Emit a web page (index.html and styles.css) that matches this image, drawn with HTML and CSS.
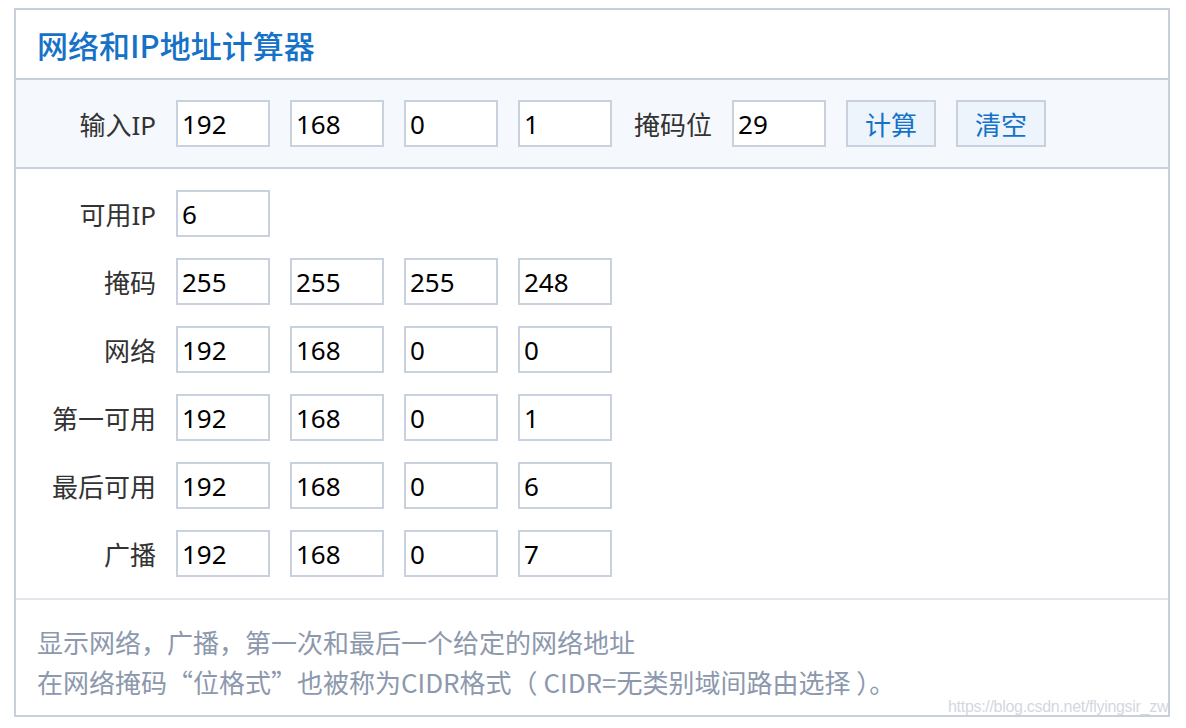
FILE: index.html
```html
<!DOCTYPE html>
<html lang="zh-CN">
<head>
  <meta charset="UTF-8">
  <meta name="viewport" content="width=device-width, initial-scale=1.0">
  <title>网络和IP地址计算器</title>
  <link rel="stylesheet" href="styles.css">
</head>
<body>
  <div class="calc">
    <div class="calc-title">网络和IP地址计算器</div>

    <div class="calc-input">
      <div class="row">
        <span class="row-label">输入IP</span>
        <input class="octet" id="ip0" value="192">
        <input class="octet" id="ip1" value="168">
        <input class="octet" id="ip2" value="0">
        <input class="octet" id="ip3" value="1">
        <span class="mask-label">掩码位</span>
        <input class="octet" id="bits" value="29">
        <button class="btn" onclick="calculate()">计算</button>
        <button class="btn" onclick="clearAll()">清空</button>
      </div>
    </div>

    <div class="calc-result">
      <div class="row">
        <span class="row-label">可用IP</span>
        <input class="octet" id="hosts" value="6">
      </div>
      <div class="row">
        <span class="row-label">掩码</span>
        <input class="octet" id="mask0" value="255">
        <input class="octet" id="mask1" value="255">
        <input class="octet" id="mask2" value="255">
        <input class="octet" id="mask3" value="248">
      </div>
      <div class="row">
        <span class="row-label">网络</span>
        <input class="octet" id="net0" value="192">
        <input class="octet" id="net1" value="168">
        <input class="octet" id="net2" value="0">
        <input class="octet" id="net3" value="0">
      </div>
      <div class="row">
        <span class="row-label">第一可用</span>
        <input class="octet" id="first0" value="192">
        <input class="octet" id="first1" value="168">
        <input class="octet" id="first2" value="0">
        <input class="octet" id="first3" value="1">
      </div>
      <div class="row">
        <span class="row-label">最后可用</span>
        <input class="octet" id="last0" value="192">
        <input class="octet" id="last1" value="168">
        <input class="octet" id="last2" value="0">
        <input class="octet" id="last3" value="6">
      </div>
      <div class="row">
        <span class="row-label">广播</span>
        <input class="octet" id="bc0" value="192">
        <input class="octet" id="bc1" value="168">
        <input class="octet" id="bc2" value="0">
        <input class="octet" id="bc3" value="7">
      </div>
    </div>

    <div class="calc-note">
      <p>显示网络，广播，第一次和最后一个给定的网络地址</p>
      <p>在网络掩码“位格式”也被称为CIDR格式（ CIDR=无类别域间路由选择 ）。</p>
    </div>
  </div>

  <div class="watermark">https://blog.csdn.net/flyingsir_zw</div>

  <script>
    function setOctets(prefix, value) {
      for (let i = 0; i < 4; i++) {
        document.getElementById(prefix + i).value = (value >>> (24 - i * 8)) & 255;
      }
    }

    function calculate() {
      let ip = 0;
      for (let i = 0; i < 4; i++) {
        ip = ip * 256 + (parseInt(document.getElementById('ip' + i).value) || 0);
      }
      let bits = parseInt(document.getElementById('bits').value) || 0;
      let mask = bits === 0 ? 0 : (0xffffffff << (32 - bits)) >>> 0;
      let net = (ip & mask) >>> 0;
      let bc = (net | (~mask >>> 0)) >>> 0;

      document.getElementById('hosts').value = Math.max(bc - net - 1, 0);
      setOctets('mask', mask);
      setOctets('net', net);
      setOctets('first', net + 1);
      setOctets('last', bc - 1);
      setOctets('bc', bc);
    }

    function clearAll() {
      document.querySelectorAll('.octet').forEach(function (el) {
        el.value = '';
      });
    }
  </script>
</body>
</html>
```

FILE: styles.css
```css
body {
  margin: 0;
  background-color: #ffffff;
  font-family: "Noto Sans", "Noto Sans CJK SC", sans-serif;
  position: relative;
}

.calc {
  width: 1156px;
  margin: 8px 0 0 14px;
  border: 2px solid #c8d0dd;
  box-sizing: border-box;
}

.calc-title {
  height: 68px;
  padding: 0 21px;
  font-family: "Noto Sans CJK SC", sans-serif;
  font-size: 31px;
  font-weight: 500;
  line-height: 70px;
  color: #1672c7;
  border-bottom: 2px solid #c8d0dd;
}

.calc-input {
  background-color: #f5f8fc;
  padding: 20px 0;
  border-bottom: 2px solid #c8d0dd;
}

.calc-result {
  display: flex;
  flex-direction: column;
  gap: 21px;
  padding: 21px 0;
  border-bottom: 2px solid #e2e7ee;
}

.row {
  display: flex;
  align-items: center;
  gap: 20px;
  height: 47px;
}

.row-label {
  width: 140px;
  text-align: right;
  font-size: 26px;
  color: #333333;
}

.mask-label {
  margin-left: 2px;
  font-size: 26px;
  color: #333333;
}

.octet {
  width: 94px;
  height: 47px;
  box-sizing: border-box;
  padding: 0 4px;
  border: 2px solid #c9d1de;
  background-color: #ffffff;
  font-family: "Noto Sans", "Noto Sans CJK SC", sans-serif;
  font-size: 26px;
  color: #000000;
  outline: none;
}

.btn {
  width: 90px;
  height: 47px;
  box-sizing: border-box;
  border: 2px solid #c9d1de;
  background-color: #edf4fc;
  font-family: "Noto Sans CJK SC", sans-serif;
  font-size: 26px;
  color: #1472c8;
  cursor: pointer;
}

.btn:hover {
  background-color: #e2edf9;
}

.calc-note {
  padding: 22px 21px 13px;
  font-family: "Noto Sans CJK SC", sans-serif;
  font-size: 26px;
  line-height: 40px;
  color: #8c98ad;
}

.calc-note p {
  margin: 0;
}

.watermark {
  position: absolute;
  top: 698px;
  left: 948px;
  font-family: "Liberation Sans", Arial, sans-serif;
  font-size: 16px;
  color: rgba(205, 210, 218, 0.9);
  letter-spacing: -0.3px;
}
```
